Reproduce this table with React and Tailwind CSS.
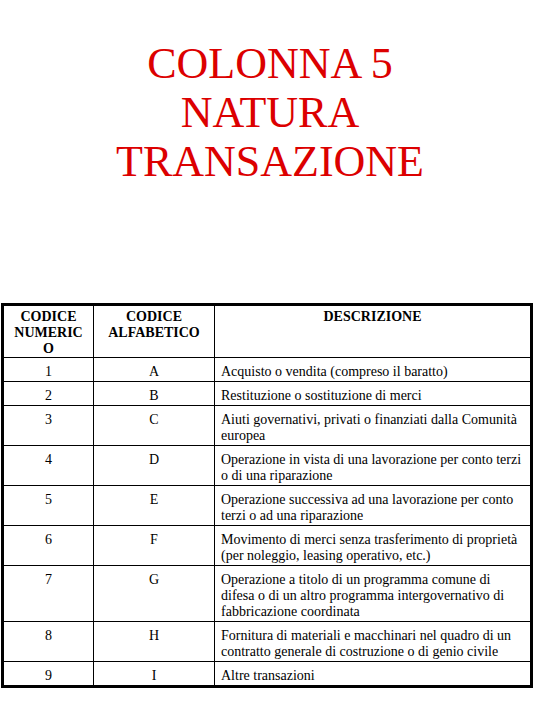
import React from "react";

const rows = [
  { n: "1", c: "A", d: ["Acquisto o vendita (compreso il baratto)"] },
  { n: "2", c: "B", d: ["Restituzione o sostituzione di merci"] },
  { n: "3", c: "C", d: ["Aiuti governativi, privati o finanziati dalla Comunità", "europea"] },
  { n: "4", c: "D", d: ["Operazione in vista di una lavorazione per conto terzi", "o di una riparazione"] },
  { n: "5", c: "E", d: ["Operazione successiva ad una lavorazione per conto", "terzi o ad una riparazione"] },
  { n: "6", c: "F", d: ["Movimento di merci senza trasferimento di proprietà", "(per noleggio, leasing operativo, etc.)"] },
  {
    n: "7",
    c: "G",
    d: [
      "Operazione a titolo di un programma comune di",
      "difesa o di un altro programma intergovernativo di",
      "fabbricazione coordinata",
    ],
  },
  { n: "8", c: "H", d: ["Fornitura di materiali e macchinari nel quadro di un", "contratto generale di costruzione o di genio civile"] },
  { n: "9", c: "I", d: ["Altre transazioni"] },
];

// Times-like face for every cell
const cell = "border border-black align-top [font-family:'Liberation_Serif',serif] text-[14px] leading-[16px] text-black";

const App = () => {
  return (
    <div className="w-[540px] h-[720px] bg-white overflow-hidden [font-family:'Liberation_Serif',serif]">
      {/* --- TITLE --- */}
      <h1 className="pt-[39px] text-center text-[44px] leading-[49px] text-[#dc0000] font-normal">
        COLONNA 5
        <br />
        NATURA
        <br />
        TRANSAZIONE
      </h1>

      {/* --- TABLE --- */}
      <div className="pl-[1px] mt-[117px]">
        <table className="w-[532px] border-collapse border-[3px] border-black [font-family:'Liberation_Serif',serif] text-[14px] leading-[16px]">
          <thead>
            <tr className="h-[53px]">
              <th className={`${cell} w-[91px] pt-[3px] font-bold text-center`}>
                CODICE
                <br />
                NUMERIC
                <br />O
              </th>
              <th className={`${cell} w-[121px] pt-[3px] font-bold text-center`}>
                CODICE
                <br />
                ALFABETICO
              </th>
              <th className={`${cell} pt-[3px] font-bold text-center`}>DESCRIZIONE</th>
            </tr>
          </thead>
          <tbody>
            {rows.map((r) => (
              <tr key={r.n}>
                <td className={`${cell} text-center pt-[6px] pb-[1px]`}>{r.n}</td>
                <td className={`${cell} text-center pt-[6px] pb-[1px]`}>{r.c}</td>
                <td className={`${cell} pl-[6px] pt-[6px] pb-[1px] whitespace-nowrap`}>
                  {r.d.map((line, i) => (
                    <div key={i}>{line}</div>
                  ))}
                </td>
              </tr>
            ))}
          </tbody>
        </table>
      </div>
    </div>
  );
};

export default App;
